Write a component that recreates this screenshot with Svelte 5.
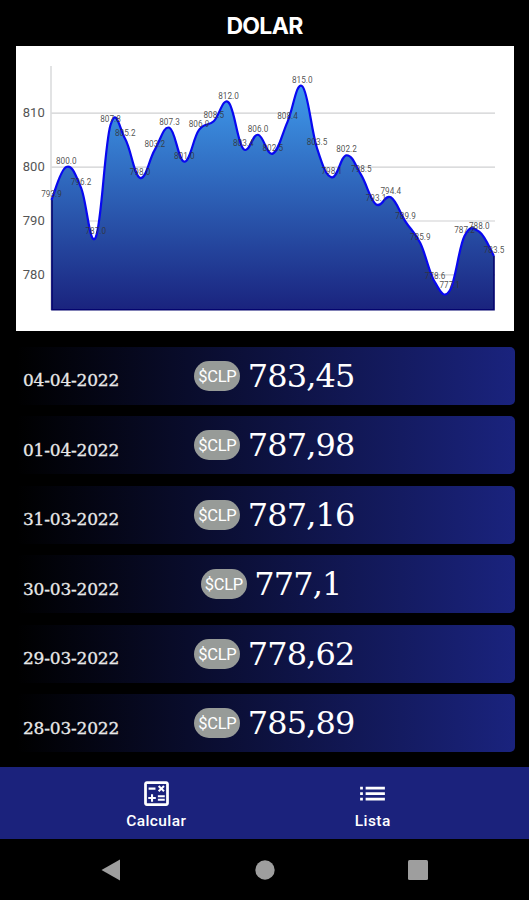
<script lang="ts">
  type Quote = { date: string; value: string }

  const quotes: Quote[] = [
    { date: "04-04-2022", value: "783,45" },
    { date: "01-04-2022", value: "787,98" },
    { date: "31-03-2022", value: "787,16" },
    { date: "30-03-2022", value: "777,1" },
    { date: "29-03-2022", value: "778,62" },
    { date: "28-03-2022", value: "785,89" },
  ]

  const history = [
    793.9, 800.0, 796.2, 787.0, 807.8, 805.2, 798.0, 803.2, 807.3, 801.0, 806.9,
    808.5, 812.0, 803.4, 806.0, 802.5, 808.4, 815.0, 803.5, 798.1, 802.2, 798.5,
    793.1, 794.4, 789.9, 785.9, 778.6, 777.1, 787.2, 788.0, 783.5,
  ]
  const ticks = [810, 800, 790, 780]

  const left = 35.5
  const right = 478
  const bottom = 264

  const toX = (i: number) => left + (i * (right - left)) / (history.length - 1)
  const toY = (v: number) => 67.2 + (810 - v) * 5.39

  const points = history.map((v, i) => ({ x: toX(i), y: toY(v), label: v.toFixed(1) }))

  // cubic line, each control point follows the slope of its neighbours
  function smooth(pts, k = 0.2) {
    const at = (i) => pts[Math.max(0, Math.min(pts.length - 1, i))]
    let d = `M${pts[0].x} ${pts[0].y}`
    for (let i = 1; i < pts.length; i++) {
      const a = at(i - 1)
      const b = at(i)
      const c1x = a.x + (b.x - at(i - 2).x) * k
      const c1y = a.y + (b.y - at(i - 2).y) * k
      const c2x = b.x - (at(i + 1).x - a.x) * k
      const c2y = b.y - (at(i + 1).y - a.y) * k
      d += `C${c1x} ${c1y} ${c2x} ${c2y} ${b.x} ${b.y}`
    }
    return d
  }

  const line = smooth(points)
  const area = `${line}L${right} ${bottom}L${left} ${bottom}Z`
</script>

<div class="screen">
  <h1>DOLAR</h1>

  <div class="chart">
    <svg width="498" height="285" viewBox="0 0 498 285">
      <defs>
        <linearGradient id="fill" gradientUnits="userSpaceOnUse" x1="0" y1="20" x2="0" y2="264">
          <stop offset="0" stop-color="#42a5f5" />
          <stop offset="1" stop-color="#1a237e" />
        </linearGradient>
      </defs>
      {#each ticks as t}
        <line class="grid" x1={left} x2="479" y1={toY(t)} y2={toY(t)} />
        <text class="tick" x="28.7" y={toY(t) + 4} text-anchor="end">{t}</text>
      {/each}
      <line class="grid" x1="35" x2="35" y1="20" y2={bottom} />
      <path d={area} fill="url(#fill)" />
      <path class="base" d="M36 {points[0].y}V263.8H478V{points[30].y}" />
      <path class="curve" d={line} />
      {#each points as p}
        <text class="value" x={p.x} y={p.y - 3} text-anchor="middle">{p.label}</text>
      {/each}
    </svg>
  </div>

  <div class="list">
    {#each quotes as q}
      <div class="row">
        <span class="date">{q.date}</span>
        <div class="price">
          <span class="badge">$CLP</span>
          <span class="amount">{q.value}</span>
        </div>
      </div>
    {/each}
  </div>

  <nav class="tabs">
    <div class="tab">
      <svg width="33" height="33" viewBox="0 0 24 24">
        <path d="M19 3H5c-1.1 0-2 .9-2 2v14c0 1.1.9 2 2 2h14c1.1 0 2-.9 2-2V5c0-1.1-.9-2-2-2zm0 16H5V5h14v14z" />
        <path d="M6.25 7.72h5v1.5h-5zM13 15.75h5v1.5h-5zM13 13.25h5v1.5h-5zM8 18h1.5v-2h2v-1.5h-2v-2H8v2H6V16h2zM14.09 10.95l1.41-1.41 1.41 1.41 1.06-1.06-1.41-1.42 1.41-1.41L16.91 6 15.5 7.41 14.09 6l-1.06 1.06 1.41 1.41-1.41 1.42z" />
      </svg>
      <span>Calcular</span>
    </div>
    <div class="tab">
      <svg width="33" height="33" viewBox="0 0 24 24">
        <path d="M3 13h2v-2H3v2zm0 4h2v-2H3v2zm0-8h2V7H3v2zm4 4h14v-2H7v2zm0 4h14v-2H7v2zM7 7v2h14V7H7z" />
      </svg>
      <span>Lista</span>
    </div>
  </nav>

  <div class="system">
    <svg width="20" height="22" viewBox="0 0 20 22"><path d="M0.5 11L19 .5v21z" /></svg>
    <svg width="20" height="20" viewBox="0 0 20 20"><circle cx="10" cy="10" r="9.7" /></svg>
    <svg width="20" height="20" viewBox="0 0 20 20"><rect width="20" height="20" rx="1.5" /></svg>
  </div>
</div>

<style>
  :global(body) {
    background: #000;
  }

  .screen {
    display: flex;
    flex-direction: column;
    width: 529px;
    height: 900px;
    background: #000;
    color: #fff;
    font-family: Roboto, sans-serif;
    overflow: hidden;
  }

  h1 {
    margin: 0;
    height: 46px;
    line-height: 52px;
    text-align: center;
    font-family: Inter, sans-serif;
    font-size: 23px;
    font-weight: 700;
    letter-spacing: -0.7px;
  }

  .chart {
    margin: 0 15px 0 16px;
    height: 285px;
    background: #fff;
  }

  .chart svg {
    display: block;
  }

  .grid {
    stroke: #cfd0d2;
    stroke-width: 1.2;
  }

  .tick {
    font-size: 13px;
    fill: #555;
  }

  .value {
    font-size: 8.2px;
    fill: #333;
    fill-opacity: 0.85;
  }

  .curve {
    fill: none;
    stroke: #0808f0;
    stroke-width: 2.2;
  }

  .base {
    fill: none;
    stroke: #04046e;
    stroke-width: 1.6;
  }

  .list {
    display: flex;
    flex-direction: column;
    gap: 11.6px;
    padding: 15.5px 14px 0 16px;
    height: 436px;
    box-sizing: border-box;
  }

  .row {
    display: grid;
    grid-template-columns: auto 1fr auto 2fr;
    align-items: center;
    height: 58px;
    padding: 0 12px 0 7px;
    border-radius: 5px;
    background: linear-gradient(90deg, #000, #1a237e);
    font-family: "DejaVu Serif", serif;
    box-sizing: border-box;
  }

  .date {
    padding-top: 9px;
    width: 97px;
    font-size: 17px;
    letter-spacing: -0.2px;
    white-space: nowrap;
    color: #e8e8e8;
    -webkit-text-stroke: 0.3px #e8e8e8;
  }

  .price {
    grid-column: 3;
    display: flex;
    align-items: center;
    gap: 7.5px;
  }

  .badge {
    width: 46px;
    height: 30px;
    border-radius: 15px;
    background: #979b98;
    font-family: Roboto, sans-serif;
    font-size: 16.5px;
    line-height: 31px;
    text-align: center;
    letter-spacing: -0.3px;
  }

  .amount {
    font-size: 32px;
    line-height: 56px;
    letter-spacing: -0.9px;
  }

  .tabs {
    display: flex;
    height: 72px;
    padding: 0 48px;
    background: #1b227c;
  }

  .tab {
    flex: 1;
    display: flex;
    flex-direction: column;
    align-items: center;
    padding-top: 9.5px;
    font-size: 15.5px;
    font-weight: 500;
    line-height: 23px;
    letter-spacing: 0.4px;
  }

  .tab svg {
    fill: #fff;
  }

  .system {
    display: flex;
    justify-content: space-between;
    align-items: center;
    padding: 0 101px;
    height: 61px;
  }

  .system svg {
    fill: #9e9e9e;
  }
</style>
